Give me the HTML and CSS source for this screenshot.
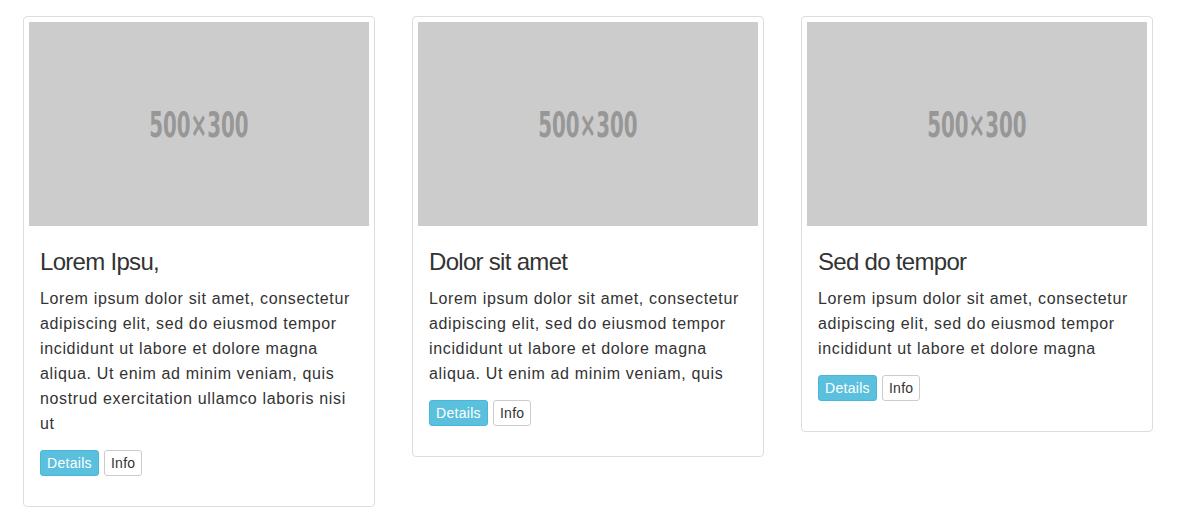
FILE: index.html
```html
<!DOCTYPE html>
<html>
<head>
<meta charset="utf-8">
<link rel="stylesheet" href="styles.css">
</head>
<body>
<div class="row">
  <div class="thumb">
    <div class="ph"><span class="ph-text">500×300</span></div>
    <div class="caption">
      <h3 class="title">Lorem Ipsu,</h3>
      <p class="text">Lorem ipsum dolor sit amet, consectetur adipiscing elit, sed do eiusmod tempor incididunt ut labore et dolore magna aliqua. Ut enim ad minim veniam, quis nostrud exercitation ullamco laboris nisi ut</p>
      <div class="actions"><a class="btn btn-info">Details</a><a class="btn btn-default">Info</a></div>
    </div>
  </div>
  <div class="thumb">
    <div class="ph"><span class="ph-text">500×300</span></div>
    <div class="caption">
      <h3 class="title">Dolor sit amet</h3>
      <p class="text">Lorem ipsum dolor sit amet, consectetur adipiscing elit, sed do eiusmod tempor incididunt ut labore et dolore magna aliqua. Ut enim ad minim veniam, quis</p>
      <div class="actions"><a class="btn btn-info">Details</a><a class="btn btn-default">Info</a></div>
    </div>
  </div>
  <div class="thumb">
    <div class="ph"><span class="ph-text">500×300</span></div>
    <div class="caption">
      <h3 class="title">Sed do tempor</h3>
      <p class="text">Lorem ipsum dolor sit amet, consectetur adipiscing elit, sed do eiusmod tempor incididunt ut labore et dolore magna</p>
      <div class="actions"><a class="btn btn-info">Details</a><a class="btn btn-default">Info</a></div>
    </div>
  </div>
</div>
</body>
</html>
```
FILE: styles.css
```css
html, body {
  margin: 0;
  background: #fff;
}
body {
  padding: 16px 0 0 23px;
  font-family: "Liberation Sans", Arial, sans-serif;
  color: #333;
}
.row {
  display: flex;
  align-items: flex-start;
  gap: 37px;
}
.thumb {
  width: 352px;
  box-sizing: border-box;
  border: 1px solid #ddd;
  border-radius: 4px;
  padding: 5px;
}
.ph {
  height: 204px;
  background: #ccc;
  display: flex;
  align-items: center;
  justify-content: center;
}
.ph-text {
  display: inline-block;
  margin-top: 3px;
  font-family: "DejaVu Sans Condensed", "DejaVu Sans", sans-serif;
  font-weight: bold;
  font-stretch: condensed;
  font-size: 35px;
  line-height: 1;
  color: #979797;
  transform: scaleX(0.63);
}
.caption {
  padding: 23px 11px 25px;
}
.title {
  margin: 0 0 11px;
  font-size: 24px;
  font-weight: 500;
  line-height: 26px;
  letter-spacing: -0.7px;
}
.text {
  margin: 0 0 14px;
  font-size: 16px;
  line-height: 25px;
  letter-spacing: 0.65px;
}
.actions {
  display: flex;
  gap: 5px;
}
.btn {
  display: inline-block;
  font-size: 14px;
  line-height: 20px;
  padding: 2px 6px;
  border: 1px solid #ccc;
  border-radius: 3px;
  letter-spacing: 0.3px;
}
.btn-info {
  background: #5bc0de;
  border-color: #46b8da;
  color: #fff;
}
.btn-default {
  background: #fff;
  color: #333;
}
```
